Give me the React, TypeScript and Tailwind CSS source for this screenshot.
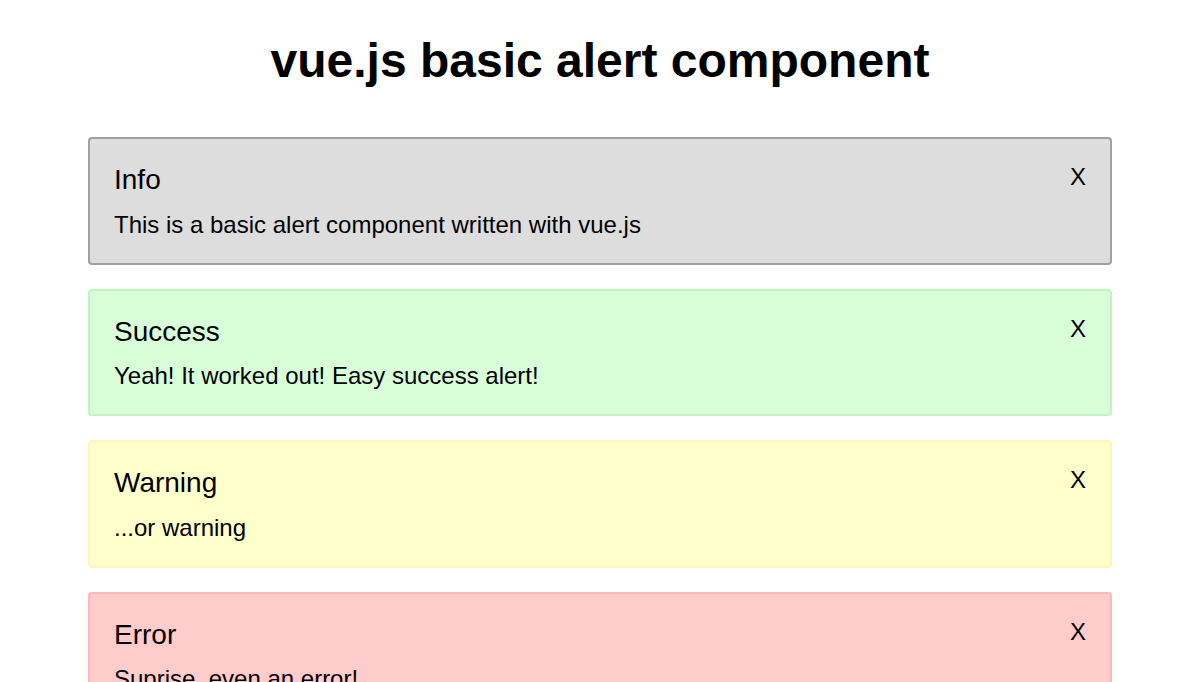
import { useState } from "react";

type AlertKind = "info" | "success" | "warning" | "error";

const styles: Record<AlertKind, string> = {
  info: "bg-[#dddddd] border-[#a0a0a0]",
  success: "bg-[#d8ffd8] border-[#bff5bf]",
  warning: "bg-[#ffffcc] border-[#fff5b8]",
  error: "bg-[#ffcccc] border-[#ffb8b8]",
};

const initialAlerts = [
  { id: 1, kind: "info" as AlertKind, title: "Info", text: "This is a basic alert component written with vue.js" },
  { id: 2, kind: "success" as AlertKind, title: "Success", text: "Yeah! It worked out! Easy success alert!" },
  { id: 3, kind: "warning" as AlertKind, title: "Warning", text: "...or warning" },
  { id: 4, kind: "error" as AlertKind, title: "Error", text: "Suprise, even an error!" },
];

function Alert({
  kind,
  title,
  text,
  onClose,
}: {
  kind: AlertKind;
  title: string;
  text: string;
  onClose: () => void;
}) {
  return (
    <div className={`mb-6 rounded-[4px] border-2 p-6 ${styles[kind]}`}>
      <div className="flex items-start justify-between">
        <div className="text-[28px] leading-[33px]">{title}</div>
        <button
          className="text-[24px] leading-[28px] cursor-pointer"
          onClick={onClose}
        >
          X
        </button>
      </div>
      <p className="mt-[14.6px] text-[24px] leading-[28px]">{text}</p>
    </div>
  );
}

export default function App() {
  const [alerts, setAlerts] = useState(initialAlerts);

  return (
    <div
      className="min-h-screen bg-white pt-[33px] text-black"
      style={{ fontFamily: '"Liberation Sans", Arial, sans-serif' }}
    >
      <h1 className="mb-[49px] text-center text-[48px] font-bold leading-[55px]">
        vue.js basic alert component
      </h1>
      <div className="mx-auto w-[1024px]">
        {alerts.map((a) => (
          <Alert
            key={a.id}
            kind={a.kind}
            title={a.title}
            text={a.text}
            onClose={() => setAlerts(alerts.filter((x) => x.id !== a.id))}
          />
        ))}
      </div>
    </div>
  );
}
